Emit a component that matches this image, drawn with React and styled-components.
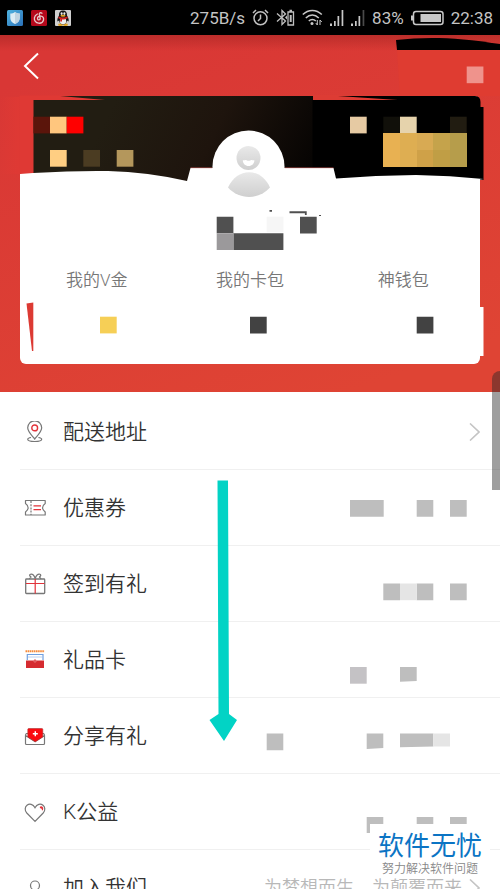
import React from "react";

import styled, { createGlobalStyle } from 'styled-components';

const GlobalStyle = createGlobalStyle`
  * {
    box-sizing: border-box;
  }

  body {
    margin: 0;
    background: #fff;
    font-family: Roboto, "Noto Sans CJK SC", sans-serif;
    font-weight: 350;
  }

  a {
    color: inherit;
    text-decoration: none;
  }
`;

const Page = styled.div`
  position: relative;
  display: flex;
  flex-direction: column;
  height: 100vh;
  overflow: hidden;
`;

const StatusBar = styled.header`
  display: flex;
  align-items: center;
  justify-content: space-between;
  flex: none;
  height: 35px;
  padding: 0 7px;
  background: #000;
  color: #c4c4c4;
  font-size: 17px;
  font-weight: 400;
  line-height: 20px;
`;

const StatusGroup = styled.div`
  display: flex;
  align-items: center;
  gap: 8px;

  svg {
    display: block;
  }
`;

const StatusReadings = styled(StatusGroup)`
  gap: 7px;
`;

const Hero = styled.section`
  position: relative;
  flex: none;
  padding: 0 20px 28px;
  background:
    linear-gradient(rgba(120, 20, 20, 0.3), rgba(120, 20, 20, 0) 16px),
    linear-gradient(160deg, #d93735 10%, #df4434 90%);
`;

const BackButton = styled.button`
  display: flex;
  align-items: center;
  height: 61px;
  padding: 0 3px;
  border: none;
  background: transparent;
  cursor: pointer;
`;

const Card = styled.div`
  display: flex;
  flex-direction: column;
  justify-content: flex-end;
  height: 268px;
  padding-bottom: 72px;
  border-radius: 6px;
  background: #fff;
`;

const HeroArt = styled.svg`
  position: absolute;
  top: 0;
  left: 0;
  width: 100%;
  height: 100%;
  pointer-events: none;
`;

const Stats = styled.nav`
  display: grid;
  grid-template-columns: repeat(3, 1fr);
  color: #777;
  font-size: 17px;
  line-height: 24px;
  text-align: center;
`;

const Menu = styled.nav`
  flex: 1;
  min-height: 0;
  padding: 2px 0 0 20px;
  overflow: hidden;
`;

const Row = styled.a`
  display: flex;
  align-items: center;
  height: 76px;
  padding: 0 20px 0 4px;
  border-bottom: 1px solid #f0f0f0;
`;

const RowIcon = styled.svg`
  flex: none;
  width: 22px;
  height: 22px;
  margin-right: 17px;
  fill: none;
  stroke: #777;
  stroke-width: 1.2;
`;

const RowTitle = styled.span`
  flex: 1;
  color: #333;
  font-size: 21px;
  line-height: 28px;
  white-space: nowrap;
`;

const RowNote = styled.span`
  margin-right: 7px;
  color: #b8b8b8;
  font-size: 18px;
  line-height: 24px;
  white-space: nowrap;
`;

const Mosaic = styled.svg`
  flex: none;
  width: 220px;
  height: 75px;
  fill: #bebebe;
`;

const ScrollHandle = styled.div`
  position: absolute;
  top: 371px;
  right: 0;
  width: 8px;
  height: 119px;
  border-radius: 10px 0 0 0;
  background: rgba(40, 40, 40, 0.45);
`;

const SwipeArrow = styled.svg`
  position: absolute;
  top: 480px;
  left: 209px;
  pointer-events: none;
`;

const Watermark = styled.div`
  position: absolute;
  right: 10px;
  bottom: 11px;
  width: 120px;
  height: 54px;
  padding-top: 7px;
  background: #fff;
  text-align: center;
  white-space: nowrap;
`;

const WatermarkName = styled.div`
  color: #0b74c4;
  font-size: 26px;
  font-weight: 400;
  line-height: 30px;
`;

const WatermarkSlogan = styled.div`
  color: #888;
  font-size: 12px;
  line-height: 16px;
`;

const Chevron = () => (
  <svg width="11" height="18" viewBox="0 0 11 18" fill="none" stroke="#c4c4c4" strokeWidth="1.6">
    <path d="M1 .5 10 9 1 17.5" />
  </svg>
);

const Signal = ({ weak }) => (
  <svg width="14" height="17" viewBox="0 0 14 17" fill="#c8c8c8">
    <path d="M0 14.5h2V17H0zM4 12h1.7v5H4zM7.5 7h1.7v10H7.5z" />
    <path d="M11.6 1h1.7v16h-1.7z" fill={weak ? '#4a4a4a' : '#c8c8c8'} />
  </svg>
);

const AppIcons = () => (
  <StatusGroup>
    <svg width="16" height="16" viewBox="0 0 16 16">
      <defs>
        <linearGradient id="shieldBg" x1="0" y1="0" x2="1" y2="1">
          <stop offset="0" stopColor="#4fb4e0" />
          <stop offset="1" stopColor="#2a70b8" />
        </linearGradient>
      </defs>
      <rect width="16" height="16" rx="1.5" fill="url(#shieldBg)" />
      <path d="M8 2c1.5 1 3 1.5 4.7 1.5V8c0 3-2 4.8-4.7 6-2.7-1.2-4.7-3-4.7-6V3.5C5 3.5 6.5 3 8 2z" fill="#dcecf4" />
      <path d="M8 2c1.5 1 3 1.5 4.7 1.5V8c0 3-2 4.8-4.7 6z" fill="#bfd3e0" />
    </svg>
    <svg width="16" height="16" viewBox="0 0 16 16">
      <rect width="16" height="16" rx="1.5" fill="#b5081b" />
      <path
        d="M11 3.2C9.5 2.2 8 3 8.3 4.5l.9 3.8c.2 2-2.5 2.3-2.7.3-.1-1.7 1.6-2.7 3.3-2.5 2.2.3 3.2 2 2.7 4-.6 2.2-2.6 3.3-4.8 3.1-3-.3-4.7-2.7-4.3-5.3.3-2 1.5-3.2 3-3.9"
        fill="none"
        stroke="#e6c9cc"
        strokeWidth="1.3"
        strokeLinecap="round"
      />
    </svg>
    <svg width="16" height="16" viewBox="0 0 16 16">
      <rect width="16" height="16" rx="1" fill="#cfcfcf" />
      <ellipse cx="5.5" cy="14.8" rx="2.5" ry="1.2" fill="#e2a321" />
      <ellipse cx="10.5" cy="14.8" rx="2.5" ry="1.2" fill="#e2a321" />
      <path d="M8 .6c-3 0-4.2 2-4 5C2.5 8 2 10 2.5 11.5l1.500-1c.4 2.5 2 4 4 4s3.6-1.5 4-4l1.5 1c.5-1.5 0-3.5-1.5-5.9.2-3-1-5-4-5z" fill="#141414" />
      <ellipse cx="8" cy="11" rx="3.2" ry="3.3" fill="#efefef" />
      <ellipse cx="6.6" cy="3.6" rx="1" ry="1.3" fill="#eee" />
      <ellipse cx="9.4" cy="3.6" rx="1" ry="1.3" fill="#eee" />
      <ellipse cx="8" cy="5.7" rx="2.6" ry="1" fill="#e2a321" />
      <path d="M3.5 6.6c3 1.5 6 1.5 9 0l.3 1.6c-2 1-4 1.3-5.8 1.2v2.2H5.2V9L3.3 8.2z" fill="#d5201f" />
    </svg>
  </StatusGroup>
);

const StatusInfo = () => (
  <StatusReadings>
    <span>275B/s</span>
    <svg width="17" height="17" viewBox="0 0 17 17" fill="none" stroke="#c0c0c0" strokeWidth="1.5">
      <circle cx="8.5" cy="9.3" r="6.5" />
      <path d="M8.5 5.5v4L6 12M1 4l3-3M16 4l-3-3" />
    </svg>
    <svg width="19" height="17" viewBox="0 0 19 17" fill="none" stroke="#c0c0c0" strokeWidth="1.3">
      <path d="M1 4.5 9.500 12 6 15.5v-14L9.5 5 1 12.5" />
      <path d="M12 3h5.500v13H12zM13.5 1.5h2.500" />
      <path d="M14.7 6v7" strokeWidth="2" />
      <path d="m9 8.5 2-2v4z" fill="#c0c0c0" stroke="none" />
    </svg>
    <svg width="21" height="17" viewBox="0 0 21 17" fill="none" stroke="#c8c8c8" strokeWidth="1.5">
      <path d="M.8 5.5c5.5-5.5 13.5-5.5 19 0M3.8 9c4-4 9-4 13 0M6.8 12c2-2 5-2 7 0" />
      <circle cx="10" cy="14.5" r="1.5" fill="#c8c8c8" stroke="none" />
      <path d="M15.3 11v5M18 11v5M13.8 14l1.5 2M18 11l1.8 2" strokeWidth="1" />
    </svg>
    <Signal />
    <Signal weak />
    <span>83%</span>
    <svg width="33" height="16" viewBox="0 0 33 16">
      <rect x="2.5" y="1.5" width="29.5" height="13" rx="2.5" fill="none" stroke="#c8c8c8" strokeWidth="1.5" />
      <path d="M0 5.5h2v5H0zM9.5 4H30v8H9.5z" fill="#c8c8c8" />
    </svg>
    <span>22:38</span>
  </StatusReadings>
);

// viewBox starts below the 35px status bar
const ProfileArt = () => (
  <HeroArt viewBox="0 35 500 357" preserveAspectRatio="xMidYMin meet" aria-hidden="true">
    <defs>
      <linearGradient id="cover" gradientUnits="userSpaceOnUse" x1="110" y1="110" x2="320" y2="210">
        <stop offset="0" stopColor="#221d12" />
        <stop offset=".45" stopColor="#1e140d" />
        <stop offset="1" stopColor="#000" />
      </linearGradient>
      <linearGradient id="person" x1="0" y1="0" x2="0" y2="1">
        <stop offset="0" stopColor="#e9e9e9" />
        <stop offset="1" stopColor="#cfcfcf" />
      </linearGradient>
      <linearGradient id="patch" x1="0" y1="0" x2="1" y2="0">
        <stop offset="0" stopColor="#df3934" stopOpacity="0" />
        <stop offset="1" stopColor="#df3934" />
      </linearGradient>
    </defs>

    <path d="M396 40c30-3.5 60-3 104 4v6H397z" fill="#000" />
    <path d="M397 50h103v46H400z" fill="#df3c31" />
    <path d="M466.7 66.5h16.7v16.7h-16.7z" fill="#ef938c" />

    <path d="M19.5 95.500H120V105H34v69H19.5z" fill="#df3934" />
    <path d="M0 97h19.5v77H0z" fill="url(#patch)" />
    <path d="M310 95h100v7H310z" fill="#dd3c34" />
    <path d="M60 96h253v85H33.5v-81H105z" fill="url(#cover)" />
    <path d="M312.5 100H398L338 96h137q5.5 0 5.5 6v5h3v73H312.5z" fill="#000" />

    <g fill="#5b150b">
      <path d="M33.5 116.7H50v16.7H33.5z" />
      <path d="M50 116.7h16.7v16.7H50z" fill="#ffc67e" />
      <path d="M66.7 116.7h16.7v16.7H66.7z" fill="#f00" />
      <path d="M50 150h16.7v16.7H50z" fill="#ffce82" />
      <path d="M83.3 150H100v16.7H83.3z" fill="#4b3c22" />
      <path d="M116.7 150h16.7v16.7h-16.7z" fill="#b4975c" />
      <path d="M350 116.7h16.7v16.7H350z" fill="#e6caa3" />
      <path d="M383.3 116.7H400v16.7h-16.7z" fill="#11100a" />
      <path d="M400 116.7h16.7v16.7H400z" fill="#e6d3ac" />
      <path d="M450 116.7h16.7v16.7H450z" fill="#211c11" />
    </g>
    <g shapeRendering="crispEdges">
      <path d="M383.3 133.3H400v33.4h-16.7z" fill="#e8b152" />
      <path d="M400 133.3h16.7v33.4H400z" fill="#deae52" />
      <path d="M416.7 133.3h16.7V150h-16.7z" fill="#d8aa53" />
      <path d="M416.7 150h16.7v16.7h-16.7z" fill="#cfa148" />
      <path d="M433.3 133.3H450V150h-16.7z" fill="#c5a34b" />
      <path d="M433.3 150H450v16.7h-16.7z" fill="#c09e45" />
      <path d="M450 133.3h16.7v33.4H450z" fill="#b69d4b" />
    </g>

    <path
      d="M20 174 33 173q42-2.5 75-2 40 1 79 10l3.5-13h143l2.5 10.5q40-3.5 80-3.5 34 .5 67.5 4l-3.5.5V200H20z"
      fill="#fff"
    />
    <path d="M190.5 167.7h22M284.5 167.7h49" stroke="#a54b48" strokeWidth=".7" />
    <path d="M212.5 166.5a36 36 0 0 1 72 0V185h-72z" fill="#fff" />

    <circle cx="248.5" cy="158" r="12" fill="url(#person)" />
    <path d="M242.8 160.200c1.500.4 2.800-.8 4 .2 1.200.6 2.400.6 3.600 0 1.200-1 2.500.2 4-.2 0 3.300-2.500 5.800-5.800 5.800s-5.800-2.500-5.800-5.800z" fill="#fff" />
    <path d="M228 187.500c9-20.500 33-20.500 42 0-11 12.500-31 12.500-42 0z" fill="url(#person)" />

    <g fill="#505050">
      <path d="M216.7 216.7h16.7v16.6h50V250h-50v-16.7h-16.7z" />
      <path d="M216.7 233.3h16.7V250h-16.7z" fill="#9b999b" />
      <path d="M266.7 216.7h16.7v15.6h-16.7z" fill="#f6f6f6" />
      <path d="M300 216.7h16.7v16.7H300zM289.5 211.3h17.2v3.7h-1.8v-1.700h-15.4zM269.5 210h2.5v1.7h-2.5zM319 215h2v1h-2z" />
    </g>

    <path d="M26.5 303.5 33.3 302.5V351h-1.3z" fill="#dc3a33" />
    <path d="M480 307h3.5v49H480z" fill="#fff" />
    <path d="M100 316.7h16.7v16.7H100z" fill="#f6cf56" />
    <path d="M250 316.7h16.7v16.7H250zM416.7 316.7h16.7v16.7h-16.7z" fill="#424242" />
  </HeroArt>
);

const rows = [
  {
    title: '配送地址',
    arrow: true,
    icon: (
      <>
        <path d="M10.7 18C7 13.500 3.700 10.5 3.7 6.8a7 7 0 0 1 14 0c0 3.7-3.3 6.7-7 11.2z" />
        <path d="M7 16.5c-2 .3-3.3 1-3.3 1.8 0 1.2 3 2.2 7 2.2s7-1 7-2.2c0-.8-1.3-1.5-3.3-1.8" />
        <circle cx="10.7" cy="6.9" r="2.9" stroke="#e2333a" strokeWidth="1.4" />
      </>
    ),
  },
  {
    title: '优惠券',
    mosaic: <path d="M90 30h33.7v16.7H90zM156.7 30h16.6v16.7h-16.6zM190 30h16.7v16.7H190z" />,
    icon: (
      <>
        <path d="M1.5 3.5h19.7v3c-3.5 2.5-3.5 6 0 8.5v3H1.5v-3c3.5-2.5 3.5-6 0-8.500z" strokeLinejoin="round" />
        <path d="M7 4v14" strokeDasharray="2 1.2" />
        <path d="M9.5 8.8H17M9.5 12.7H17" stroke="#e2333a" />
      </>
    ),
  },
  {
    title: '签到有礼',
    mosaic: (
      <>
        <path d="M123.3 37.5H140v16.7h-16.7zM156.7 37.5h16.6v16.7h-16.6zM190 37.5h16.7v16.7H190z" />
        <path d="M140 37.5h16.7v16.7H140z" fill="#e5e5e5" />
      </>
    ),
    icon: (
      <>
        <rect x="1.7" y="6" width="19" height="14.5" rx=".8" strokeWidth="1.3" />
        <path d="M2 10.5h18.5M11.2 6v14.5" stroke="#e2333a" />
        <path d="M11.2 5.7C10.5 2.5 8.5.5 6.5 1.2 5 1.8 5.8 4 7.5 4M11.2 5.7c.7-3.2 2.7-5.2 4.7-4.5 1.5.6.7 2.8-1 2.8M7.5 4c-1 .3-1.7 1-2 2M15 4c1 .3 1.7 1 2 2" />
      </>
    ),
  },
  {
    title: '礼品卡',
    mosaic: (
      <>
        <path d="M90 45h16.7v16.7H90z" fill="#c4c2c5" />
        <path d="M140 45h16.7v14l-16.7.8z" />
      </>
    ),
    icon: (
      <>
        <path d="M1.5 2.2h19" stroke="#f58a3a" strokeWidth="2" strokeDasharray="1.6 .5" />
        <path d="M3.3 11V5.5H19V11" stroke="#6f9fe0" />
        <path d="M4 8h14.5" stroke="#a9c4ec" strokeWidth=".8" />
        <path d="M2 11.5h7.7q1.3-1.8 2.6 0H20V19H2z" fill="#d52b30" stroke="none" />
        <circle cx="11" cy="12" r="1.2" fill="#d52b30" stroke="#f0a0a0" strokeWidth=".6" />
      </>
    ),
  },
  {
    title: '分享有礼',
    mosaic: (
      <>
        <path d="M6.7 35.5h16.6v16.7H6.7zM106.7 35.5h16.6V50l-16.6 1zM140 35.5h33.3v13l-33.3.7z" />
        <path d="M173.3 35.5H190v13h-16.7z" fill="#e5e5e5" />
      </>
    ),
    icon: (
      <>
        <path d="M4 8.5H2.5q-1 .5-1 2v8q0 1 1 1h17q1 0 1-1v-8q0-1.5-1-2H18M1.5 10.5l9.5 6 9.5-6" />
        <path d="M3.8 4.5q0-1 1-1h13q1 0 1 1V12L11.3 16.8 3.8 12z" fill="#fa0a0f" stroke="#a33" strokeWidth=".6" />
        <path d="M11.3 6.2v5M8.8 8.7h5" stroke="#fff" strokeWidth="1.4" />
      </>
    ),
  },
  {
    title: 'K公益',
    mosaic: <path d="M106.7 43h16.6v7H110v9h-3.3zM156.7 43h16.6v7h-16.6zM190 43h16.7v7H190z" />,
    icon: (
      <>
        <path d="M11 20.3 2.8 12C.5 9.5.8 6 3 4.3 5.5 2.3 9 3 11 6.8 13 3 16.5 2.3 19 4.3c2.2 1.7 2.5 5.2.2 7.700z" />
        <path d="M16 6.2c2-.8 3.3.5 2.3 3M16 6.2l2 1.3" stroke="#e2333a" />
      </>
    ),
  },
  {
    title: '加入我们',
    note: '为梦想而生，为颠覆而来',
    arrow: true,
    icon: (
      <>
        <circle cx="11" cy="8.5" r="4.5" />
        <path d="M2.5 21.5c0-4 3.5-7 8.5-7s8.5 3 8.5 7" />
      </>
    ),
  },
];

const App = () => {
  return (
    <Page>
      <GlobalStyle />
      <StatusBar>
        <AppIcons />
        <StatusInfo />
      </StatusBar>
      <Hero>
        <BackButton aria-label="返回">
          <svg width="16" height="28" viewBox="0 0 16 28" fill="none" stroke="#fff" strokeWidth="2">
            <path d="M15 1.5 2 14l13 12.5" />
          </svg>
        </BackButton>
        <Card>
          <Stats>
            <a href="#gold">我的V金</a>
            <a href="#cards">我的卡包</a>
            <a href="#wallet">神钱包</a>
          </Stats>
        </Card>
        <ProfileArt />
      </Hero>
      <Menu>
        {rows.map((row) => (
          <Row href="#" key={row.title}>
            <RowIcon viewBox="0 0 22 22">{row.icon}</RowIcon>
            <RowTitle>{row.title}</RowTitle>
            {row.mosaic && <Mosaic viewBox="0 0 220 75">{row.mosaic}</Mosaic>}
            {row.note && <RowNote>{row.note}</RowNote>}
            {row.arrow && <Chevron />}
          </Row>
        ))}
      </Menu>
      <SwipeArrow width="28" height="261" viewBox="0 0 28 261" fill="#02d3c5">
        <path d="M8.5.5H19L20 234l8 6-13 21L.5 240l9-6z" />
      </SwipeArrow>
      <ScrollHandle />
      <Watermark>
        <WatermarkName>软件无忧</WatermarkName>
        <WatermarkSlogan>努力解决软件问题</WatermarkSlogan>
      </Watermark>
    </Page>
  );
};

export default App;
